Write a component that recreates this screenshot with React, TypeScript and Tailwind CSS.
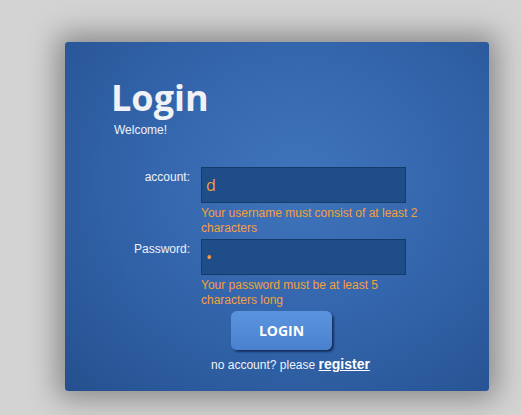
import { useState } from 'react';

function Field({
  label,
  value,
  error,
  password,
}: {
  label: string;
  value: string;
  error: string;
  password?: boolean;
}) {
  return (
    <div className="flex">
      <label className="w-[136px] pr-[11px] pt-[1px] text-right text-[12px] text-[#eef2f8]">
        {label}
      </label>
      <div className="flex flex-col">
        <input
          type={password ? 'password' : 'text'}
          defaultValue={value}
          className="h-[36px] w-[205px] border border-[#153b6b] bg-[#1f4d88] px-[4px] text-[16px] text-[#f5a030] outline-none [font-family:'Open_Sans',sans-serif]"
        />
        <p className="mt-[3px] w-[225px] text-[12px] leading-[15px] text-[#f5a03a]">
          {error}
        </p>
      </div>
    </div>
  );
}

export default function App() {
  const [, setSubmitted] = useState(false);

  return (
    <div className="h-[415px] w-[521px] overflow-hidden bg-[#d3d3d3] pl-[65px] pt-[42px] [font-family:'Liberation_Sans',Arial,sans-serif]">
      <div className="h-[349px] w-[424px] rounded-[3px] bg-[radial-gradient(ellipse_at_55%_40%,#3f74bb_0%,#3466ad_45%,#25508f_100%)] shadow-[0_0_28px_8px_rgba(0,0,0,0.35)]">
        <div className="pl-[46px] pt-[31px]">
          <h1 className="text-[36px] font-bold leading-[50px] text-[#f0f2f6] [font-family:'Open_Sans',sans-serif]">
            Login
          </h1>
          <p className="ml-[3px] text-[12px] leading-[14px] text-[#eef2f8]">Welcome!</p>
        </div>

        <form
          className="mt-[30px] flex flex-col gap-[3px]"
          onSubmit={(e) => {
            e.preventDefault();
            setSubmitted(true);
          }}
        >
          <Field
            label="account:"
            value="d"
            error="Your username must consist of at least 2 characters"
          />
          <Field
            label="Password:"
            value="d"
            password
            error="Your password must be at least 5 characters long"
          />

          <div className="flex flex-col items-center pl-[9px]">
            <button
              type="submit"
              className="h-[39px] w-[101px] rounded-[6px] bg-[linear-gradient(#5b94de,#4a81cf)] text-[14px] font-bold text-white shadow-[2px_2px_2px_rgba(10,30,70,0.7)] [font-family:'Open_Sans',sans-serif]"
            >
              LOGIN
            </button>
            <p className="ml-[18px] mt-[4px] text-[12px] text-[#eef2f8]">
              no account? please{' '}
              <a href="#" className="text-[14px] font-bold text-white underline">
                register
              </a>
            </p>
          </div>
        </form>
      </div>
    </div>
  );
}
